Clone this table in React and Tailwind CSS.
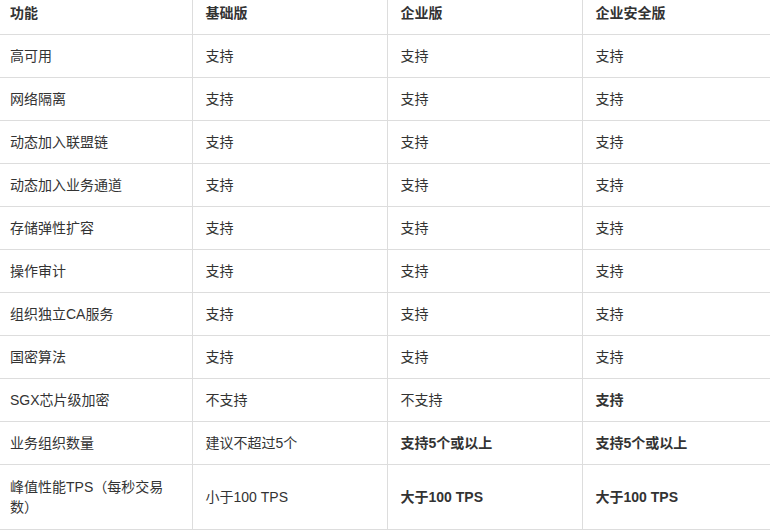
const rows = [
  ['高可用', '支持', '支持', '支持'],
  ['网络隔离', '支持', '支持', '支持'],
  ['动态加入联盟链', '支持', '支持', '支持'],
  ['动态加入业务通道', '支持', '支持', '支持'],
  ['存储弹性扩容', '支持', '支持', '支持'],
  ['操作审计', '支持', '支持', '支持'],
  ['组织独立CA服务', '支持', '支持', '支持'],
  ['国密算法', '支持', '支持', '支持'],
  ['SGX芯片级加密', '不支持', '不支持', { b: '支持' }],
  ['业务组织数量', '建议不超过5个', { b: '支持5个或以上' }, { b: '支持5个或以上' }],
];

function Cell({ value, first, last }) {
  const bold = typeof value === 'object';
  return (
    <td
      className={`border-b border-[#dddddd] align-middle ${last ? '' : 'border-r'} ${first ? 'pl-[10px]' : 'pl-[13px]'} ${bold ? 'font-bold' : ''}`}
    >
      {bold ? value.b : value}
    </td>
  );
}

export default function App() {
  return (
    <div className="w-[770px] h-[532px] overflow-hidden bg-white text-[14px] leading-[20px] text-[#333333]" style={{ fontFamily: '"Liberation Sans", "Noto Sans CJK SC", sans-serif' }}>
      <table className="w-[770px] table-fixed border-collapse">
        <colgroup>
          <col className="w-[192px]" />
          <col className="w-[195px]" />
          <col className="w-[195px]" />
          <col />
        </colgroup>
        <thead>
          <tr className="h-[34px]">
            {['功能', '基础版', '企业版', '企业安全版'].map((h, i) => (
              <th
                key={h}
                className={`border-b border-[#dddddd] text-left font-bold pb-[8px] ${i < 3 ? 'border-r' : ''} ${i === 0 ? 'pl-[10px]' : 'pl-[13px]'}`}
              >
                {h}
              </th>
            ))}
          </tr>
        </thead>
        <tbody>
          {rows.map((r) => (
            <tr key={r[0]} className="h-[43px]">
              {r.map((v, i) => (
                <Cell key={i} value={v} first={i === 0} last={i === 3} />
              ))}
            </tr>
          ))}
          <tr className="h-[65px]">
            <td className="border-b border-r border-[#dddddd] pl-[10px] pr-[16px] align-middle">
              峰值性能TPS（每秒交易数）
            </td>
            <td className="border-b border-r border-[#dddddd] pl-[13px] align-middle">小于100 TPS</td>
            <td className="border-b border-r border-[#dddddd] pl-[13px] align-middle font-bold">大于100 TPS</td>
            <td className="border-b border-[#dddddd] pl-[13px] align-middle font-bold">大于100 TPS</td>
          </tr>
        </tbody>
      </table>
    </div>
  );
}
